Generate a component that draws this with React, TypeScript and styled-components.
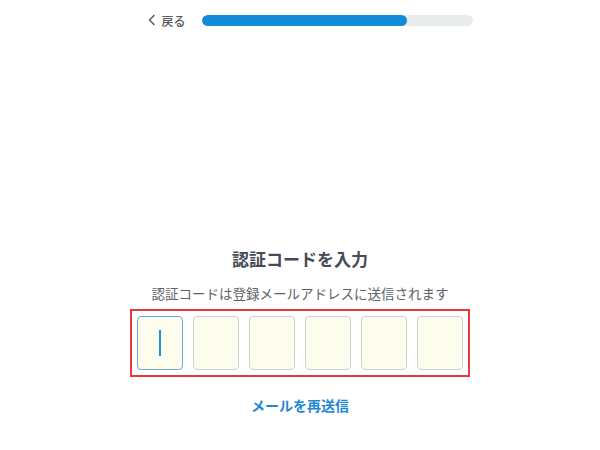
import React from 'react';
import styled, { createGlobalStyle } from 'styled-components';

const GlobalStyle = createGlobalStyle`
  html, body {
    margin: 0;
    padding: 0;
    background: #ffffff;
  }
  body {
    font-family: "Noto Sans CJK JP", "Noto Sans", sans-serif;
  }
`;

type CellProps = {
  active: boolean;
};

const CODE_LENGTH = 6;

const App = () => {
  return (
    <>
      <GlobalStyle />
      <Page>
        <Header>
          <BackButton>
            <svg width="12" height="12" viewBox="0 0 12 12" fill="none">
              <path d="M8 1.5 L3.5 6 L8 10.5" stroke="#555a60" strokeWidth="1.5" strokeLinecap="round" strokeLinejoin="round" />
            </svg>
            戻る
          </BackButton>
          <Progress>
            <ProgressFill style={{ width: '76%' }} />
          </Progress>
        </Header>
        <Main>
          <Title>認証コードを入力</Title>
          <Description>認証コードは登録メールアドレスに送信されます</Description>
          <CodeFrame>
            {Array.from({ length: CODE_LENGTH }).map((_, i) => (
              <Cell key={i} active={i === 0}>
                {i === 0 ? <Caret /> : null}
              </Cell>
            ))}
          </CodeFrame>
          <ResendLink>メールを再送信</ResendLink>
        </Main>
      </Page>
    </>
  );
};

export default App;

const Page = styled.div`
  width: 600px;
  height: 450px;
  display: flex;
  flex-direction: column;
  align-items: center;
`;

const Header = styled.div`
  display: flex;
  align-items: center;
  gap: 16px;
  width: 327px;
  height: 40px;
  margin-left: 18px;
`;

const BackButton = styled.button`
  display: flex;
  align-items: center;
  gap: 4px;
  border: none;
  background: none;
  padding: 0;
  color: #555a60;
  font-family: "Noto Sans CJK JP", sans-serif;
  font-size: 12px;
  font-weight: 500;
  cursor: pointer;
`;

const Progress = styled.div`
  flex: 1;
  height: 11px;
  border-radius: 6px;
  background: #e8eced;
  overflow: hidden;
`;

const ProgressFill = styled.div`
  height: 100%;
  border-radius: 6px;
  background: #128bd9;
`;

const Main = styled.div`
  display: flex;
  flex-direction: column;
  align-items: center;
  margin-top: 205px;
`;

const Title = styled.h1`
  margin: 0;
  color: #454a55;
  font-size: 17px;
  font-weight: 700;
  line-height: 28px;
`;

const Description = styled.p`
  margin: 10px 0 0;
  color: #5f6368;
  font-size: 13.5px;
  line-height: 20px;
`;

const CodeFrame = styled.div`
  display: flex;
  gap: 10px;
  margin-top: 6px;
  padding: 5px;
  border: 2px solid #e8393e;
`;

const Cell = styled.div<CellProps>`
  display: flex;
  align-items: center;
  justify-content: center;
  box-sizing: border-box;
  width: 46px;
  height: 54px;
  border-radius: 4px;
  background: #fdfdee;
  border: 1.5px solid ${(props) => (props.active ? '#6aa8d6' : '#cfcfcf')};
`;

const Caret = styled.span`
  width: 2px;
  height: 26px;
  background: #2290d8;
`;

const ResendLink = styled.a`
  margin-top: 18px;
  color: #1f8ad3;
  font-size: 14px;
  font-weight: 700;
  line-height: 20px;
  cursor: pointer;
`;
